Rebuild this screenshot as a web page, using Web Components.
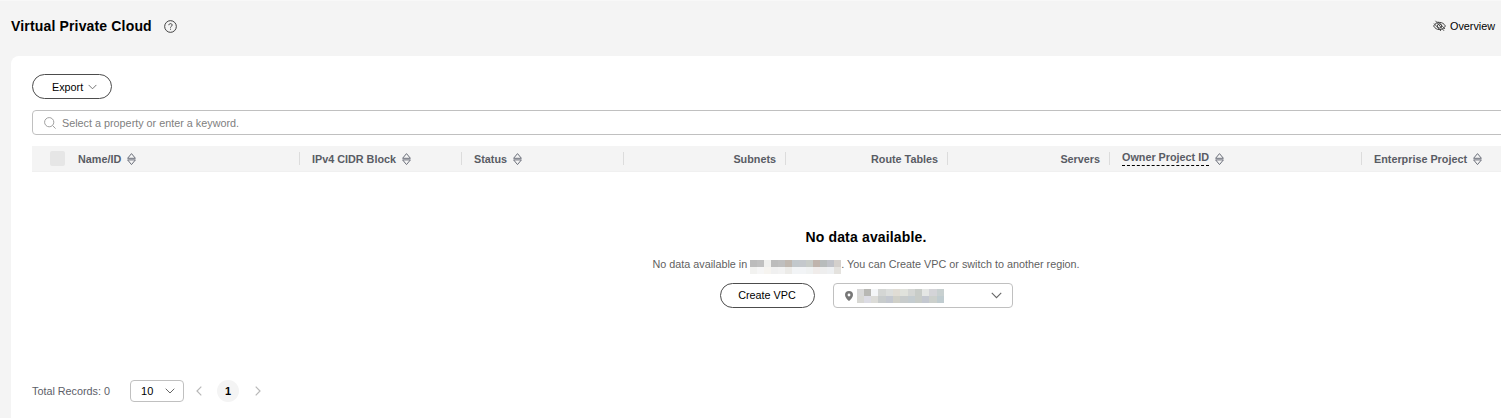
<!DOCTYPE html>
<html lang="en">
<head>
<meta charset="UTF-8">
<title>Virtual Private Cloud</title>
<style>
  html, body { margin: 0; padding: 0; height: 100%; }
  body { background: #f4f4f4; font: 10.8px "Liberation Sans", Arial, sans-serif; color: #000; overflow: hidden; }
</style>
</head>
<body>
<vpc-page>
  <vpc-header slot="header"></vpc-header>
  <vpc-toolbar slot="toolbar"></vpc-toolbar>
  <vpc-search slot="toolbar"></vpc-search>
  <vpc-table slot="table"></vpc-table>
  <vpc-empty slot="table"></vpc-empty>
  <vpc-pager slot="pager"></vpc-pager>
</vpc-page>

<script>
  const chevron = (w, h, color) => `<svg width="${w}" height="${h}" viewBox="0 0 10 6" fill="none" stroke="${color}" stroke-width="1"><path d="M.7.7 5 5l4.300-4.300"/></svg>`;

  customElements.define("vpc-page", class extends HTMLElement {
    connectedCallback() {
      this.attachShadow({mode: "open"}).innerHTML = `
        <style>
          :host { display: flex; flex-direction: column; width: 1501px; height: 418px; overflow: hidden; }
          .card { flex: 1; margin-left: 11px; background: #fff; border-radius: 8px 0 0 0; padding: 18px 0 0 21px; display: flex; flex-direction: column; min-width: 0; overflow: hidden; }
          .foot { margin-top: auto; }
        </style>
        <slot name="header"></slot>
        <div class="card">
          <slot name="toolbar"></slot>
          <slot name="table"></slot>
          <div class="foot"><slot name="pager"></slot></div>
        </div>`;
    }
  });

  customElements.define("vpc-header", class extends HTMLElement {
    connectedCallback() {
      this.attachShadow({mode: "open"}).innerHTML = `
        <style>
          :host { display: flex; align-items: center; height: 56px; padding: 0 6px 5px 11px; box-sizing: border-box; border-top: 1px solid #f8f8f8; }
          h1 { margin: 0; font: bold 14px "Liberation Sans", Arial, sans-serif; color: #000; letter-spacing: .16px; }
          .help { margin-left: 12px; display: flex; }
          .overview { margin-left: auto; display: flex; align-items: center; gap: 4px; color: #000; }
          svg { display: block; }
        </style>
        <h1>Virtual Private Cloud</h1>
        <span class="help">
          <svg width="13" height="13" viewBox="0 0 14 14" fill="none" stroke="#333"><circle cx="7" cy="7" r="6.300"/><path d="M5.200 5.600c0-1 .8-1.700 1.800-1.700s1.800.7 1.800 1.600c0 1.300-1.800 1.300-1.800 2.700"/><path d="M7 9.400v1"/></svg>
        </span>
        <span class="overview">
          <svg width="13" height="12" viewBox="0 0 13 12" fill="none" stroke="#444"><path d="M.6 6C2 3.600 4 2.400 6.500 2.400S11 3.600 12.400 6C11 8.400 9 9.600 6.500 9.600S2 8.400.6 6Z"/><circle cx="6.500" cy="6" r="2.100"/><path d="M2.500.8l8.500 10M5 1.500l7 7.500M1 3.500l7 7.500" stroke-width=".9"/></svg>
          <span>Overview</span>
        </span>`;
    }
  });

  customElements.define("vpc-button", class extends HTMLElement {
    connectedCallback() {
      this.attachShadow({mode: "open"}).innerHTML = `
        <style>
          :host { display: inline-flex; align-items: center; justify-content: center; box-sizing: border-box; height: 25px; border: 1px solid #4c4c4c; border-radius: 13px; background: #fff; color: #000; gap: 5px; }
        </style>
        <slot></slot>`;
    }
  });

  customElements.define("vpc-toolbar", class extends HTMLElement {
    connectedCallback() {
      this.attachShadow({mode: "open"}).innerHTML = `
        <style>
          :host { display: flex; }
          vpc-button { width: 80px; justify-content: flex-start; padding-left: 19px; }
          svg { display: block; margin-top: 1px; }
        </style>
        <vpc-button>Export ${chevron(9, 6, "#666")}</vpc-button>`;
    }
  });

  customElements.define("vpc-search", class extends HTMLElement {
    connectedCallback() {
      this.attachShadow({mode: "open"}).innerHTML = `
        <style>
          :host { display: flex; align-items: center; gap: 6px; box-sizing: border-box; width: 1480px; height: 25px; margin-top: 11px; padding-left: 11px; border: 1px solid #c0c0c0; border-radius: 4px; color: #808080; }
          svg { display: block; }
          span { padding-top: 1px; }
        </style>
        <svg width="12" height="12" viewBox="0 0 12 12" fill="none" stroke="#a0a0a0"><circle cx="5.200" cy="5.200" r="4.600"/><path d="M8.500 8.500 11.600 11.600"/></svg>
        <span>Select a property or enter a keyword.</span>`;
    }
  });

  const sorter = `<svg class="sort" width="9" height="12" viewBox="0 0 9 12" fill="none" stroke="#6b6f7a"><path d="M.6 5.300 4.500 .6l3.900 4.700Z"/><path d="M.6 6.900h7.800L4.500 11.600Z"/></svg>`;

  customElements.define("vpc-table", class extends HTMLElement {
    connectedCallback() {
      const cols = [
        {w: 268, label: "Name/ID", sort: true, check: true},
        {w: 162, label: "IPv4 CIDR Block", sort: true},
        {w: 162, label: "Status", sort: true},
        {w: 162, label: "Subnets", right: true},
        {w: 162, label: "Route Tables", right: true},
        {w: 162, label: "Servers", right: true},
        {w: 252, label: "Owner Project ID", sort: true, tip: true},
        {w: 148, label: "Enterprise Project", sort: true}
      ];
      const cells = cols.map(c => `
        <div class="cell ${c.right ? "right" : ""} ${c.check ? "first" : ""}" style="width:${c.w}px">
          ${c.check ? '<span class="check"></span>' : ""}
          <span class="${c.tip ? "tip" : ""}">${c.label}</span>
          ${c.sort ? sorter : ""}
        </div>`).join("");
      this.attachShadow({mode: "open"}).innerHTML = `
        <style>
          :host { display: flex; width: 1480px; height: 26px; margin-top: 11px; background: #f4f4f4; border-bottom: 1px solid #f0f0f0; box-sizing: border-box; font-weight: bold; color: #595c64; font-size: 10.8px; }
          .cell { display: flex; align-items: center; gap: 6px; box-sizing: border-box; height: 100%; padding: 0 10px 0 12px; position: relative; }
          .cell.first { padding-left: 18px; }
          .cell.right { justify-content: flex-end; }
          .cell:not(:last-child)::after { content: ""; position: absolute; right: 0; top: 6px; height: 13px; width: 1px; background: #dcdcdc; }
          .check { width: 15px; height: 15px; border-radius: 2px; background: #e6e6e6; margin-right: 7px; }
          .tip { border-bottom: 1px dashed #000; padding-bottom: 2px; margin-top: -1px; }
          .sort { display: block; }
        </style>
        ${cells}`;
    }
  });

  // mosaic block standing in for the pixelated region name
  customElements.define("vpc-mosaic", class extends HTMLElement {
    connectedCallback() {
      const rows = this.getAttribute("rows").split("|");
      const size = Number(this.getAttribute("size"));
      const cells = rows.map(r => r.split(" ").map(c => `<i style="background:#${c}"></i>`).join("")).join("");
      this.attachShadow({mode: "open"}).innerHTML = `
        <style>
          :host { display: inline-grid; grid-template-columns: repeat(${rows[0].split(" ").length}, ${size}px); grid-auto-rows: 7px; vertical-align: middle; }
        </style>
        ${cells}`;
    }
  });

  customElements.define("vpc-empty", class extends HTMLElement {
    connectedCallback() {
      this.attachShadow({mode: "open"}).innerHTML = `
        <style>
          :host { display: flex; flex-direction: column; align-items: center; box-sizing: border-box; width: 1469px; padding: 57px 0 0 199px; color: #5f5f5f; }
          h2 { margin: 0; font: bold 14px/16px "Liberation Sans", Arial, sans-serif; color: #000; letter-spacing: .16px; }
          p { margin: 12px 0 0; line-height: 14px; display: flex; align-items: center; white-space: pre; }
          p vpc-mosaic { transform: translateY(3px); }
          .actions { display: flex; gap: 18px; margin-top: 12px; }
          vpc-button { width: 95px; padding-bottom: 1px; }
          .region { display: flex; align-items: center; box-sizing: border-box; width: 180px; height: 25px; padding: 0 10px 0 11px; border: 1px solid #c0c0c0; border-radius: 4px; gap: 4px; }
          .region .end { margin-left: auto; }
          svg { display: block; }
        </style>
        <h2>No data available.</h2>
        <p><span>No data available in </span><vpc-mosaic size="7" rows="bcbcbc c0c0c0 f0f0ee bcbcbc bfbfbf c0b8b0 c2c8cc c4c8cc c8ccc8 c0b4ac b8bcbc c0c2c8 d4d0cc|f2f2f0 f6f6f6 f6f4f0 f0f0f0 f2f2f2 ecebe8 f2f4f6 f2f4f6 f0f2f2 f0ecea eeeeee eef0f2 e4e2de"></vpc-mosaic><span>. You can Create VPC or switch to another region.</span></p>
        <div class="actions">
          <vpc-button>Create VPC</vpc-button>
          <div class="region">
            <svg width="8" height="10" viewBox="0 0 8 10" fill="#777"><path fill-rule="evenodd" d="M4 0a4 4 0 0 1 4 4c0 2.400-2.600 4.800-4 6C2.600 8.800 0 6.400 0 4a4 4 0 0 1 4-4Zm0 2.600a1.400 1.400 0 1 0 0 2.800 1.400 1.400 0 0 0 0-2.800Z"/></svg>
            <vpc-mosaic size="7.300" rows="d8d8d8 b8b8b4 f4f6f8 d4d6d4 dcdedc e0dcd4 e0e2dc d4d6d4 c8ccc8 e4e6e4 d4d4d8 c8d0d0|d8d8d4 dcdce4 dcdcd8 c8cccc c4c8d0 d0d0c8 c8cccc c4ccd0 c8ccc8 c4c8d0 ccd0cc c0ccd0"></vpc-mosaic>
            <span class="end">${chevron(11, 7, "#666")}</span>
          </div>
        </div>`;
    }
  });

  customElements.define("vpc-pager", class extends HTMLElement {
    connectedCallback() {
      this.attachShadow({mode: "open"}).innerHTML = `
        <style>
          :host { display: flex; align-items: center; height: 22px; margin-bottom: 16px; color: #5c6068; }
          span { padding-bottom: 1px; }
          .size { display: flex; align-items: center; justify-content: space-between; box-sizing: border-box; width: 54px; height: 22px; margin-left: 20px; padding: 0 8px 0 10px; border: 1px solid #c0c0c0; border-radius: 4px; color: #000; font-size: 11px; }
          .nav { display: flex; align-items: center; margin-left: 12px; }
          .page { box-sizing: border-box; width: 22px; height: 22px; border-radius: 50%; background: #f4f4f4; color: #000; font-weight: bold; font-size: 11px; display: flex; align-items: center; justify-content: center; margin: 0 16px 0 15px; }
          svg { display: block; }
        </style>
        <span>Total Records: 0</span>
        <div class="size"><span>10</span>${chevron(10, 6, "#666")}</div>
        <div class="nav">
          <svg width="6" height="10" viewBox="0 0 6 10" fill="none" stroke="#b8b8b8" stroke-width="1.200"><path d="M5.300.7 1 5l4.300 4.300"/></svg>
          <span class="page">1</span>
          <svg width="6" height="10" viewBox="0 0 6 10" fill="none" stroke="#b8b8b8" stroke-width="1.200"><path d="M.7.7 5 5 .7 9.300"/></svg>
        </div>`;
    }
  });
</script>
</body>
</html>
